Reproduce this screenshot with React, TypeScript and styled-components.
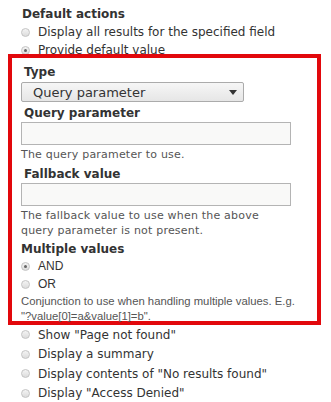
import React from "react";
import styled, { createGlobalStyle } from "styled-components";

const GlobalStyle = createGlobalStyle`
    body {
        margin: 0;
        background: #fff;
        font-family: "DejaVu Sans", sans-serif;
        color: #333;
    }
`;

const Page = styled.div`
    width: 331px;
    height: 402px;
    overflow: hidden;
    padding-top: 5px;
    box-sizing: border-box;
`;

const Heading = styled.div`
    font-weight: bold;
    font-size: 12px;
    line-height: 18px;
    padding-left: 22px;
`;

const RadioList = styled.div<{ $row: number; $indent?: number }>`
    display: flex;
    flex-direction: column;
    padding-left: ${props => props.$indent ?? 21}px;

    & > label {
        height: ${props => props.$row}px;
    }
`;

const RadioRow = styled.label<{ $sans?: boolean }>`
    display: flex;
    align-items: center;
    gap: 8px;
    font-size: 12px;
    font-family: ${props => (props.$sans ? '"Liberation Sans", Arial, sans-serif' : '"DejaVu Sans", sans-serif')};
    color: #333;
`;

const RadioDot = styled.span<{ $checked?: boolean }>`
    width: 9px;
    height: 9px;
    border-radius: 50%;
    border: 1px solid #c4c4c4;
    background: linear-gradient(#f4f4f4, #dcdcdc);
    box-sizing: border-box;
    display: flex;
    align-items: center;
    justify-content: center;
    flex: none;

    &::after {
        content: "";
        width: 3px;
        height: 3px;
        border-radius: 50%;
        background: ${props => (props.$checked ? "#666" : "transparent")};
    }
`;

const Highlight = styled.section`
    position: relative;
    z-index: 1;
    margin: -5px 10px 0 8px;
    border: 4px solid #e2080c;
    background: #fff;
    padding: 5px 0 0 9px;
    height: 271px;
    box-sizing: border-box;
`;

const Field = styled.div`
    display: flex;
    flex-direction: column;
    align-items: flex-start;
`;

const Label = styled.div`
    font-weight: bold;
    font-size: 12px;
    line-height: 18px;
    padding-left: 3px;
`;

const GroupTitle = styled.div`
    font-weight: bold;
    font-size: 12px;
    line-height: 16px;
    margin-top: 3px;
`;

const Select = styled.div`
    width: 223px;
    height: 20px;
    margin-top: 1px;
    box-sizing: border-box;
    border: 1px solid #ababab;
    border-radius: 2px;
    background: linear-gradient(#f6f6f6, #e6e6e6);
    display: flex;
    align-items: center;
    justify-content: space-between;
    padding: 0 6px 0 11px;
    font-size: 13px;
    color: #333;
`;

const Arrow = styled.span`
    width: 0;
    height: 0;
    border-left: 4px solid transparent;
    border-right: 4px solid transparent;
    border-top: 5px solid #333;
`;

const TextInput = styled.input`
    width: 270px;
    height: 23px;
    box-sizing: border-box;
    border: 1px solid #b4b4b4;
    background: #f9f9f8;
    margin: 0;
    padding: 0 4px;
    outline: none;
`;

const Hint = styled.div`
    font-size: 11px;
    letter-spacing: 0.2px;
    line-height: 15px;
    color: #555;
    margin-top: 2px;
    width: 255px;
`;

const Note = styled.div`
    font-size: 11.3px;
    font-family: "Liberation Sans", Arial, sans-serif;
    line-height: 15px;
    color: #555;
    margin-top: 1px;
    width: 290px;
`;

const Code = styled.span`
    white-space: nowrap;
`;

const Spacer = styled.div<{ $h: number }>`
    height: ${props => props.$h}px;
`;

const App: React.FC = () => {
    return (
        <>
            <GlobalStyle />
            <Page>
                <Heading>Default actions</Heading>
                <RadioList $row={18}>
                    <RadioRow><RadioDot />Display all results for the specified field</RadioRow>
                    <RadioRow><RadioDot $checked />Provide default value</RadioRow>
                </RadioList>

                <Highlight>
                    <Field>
                        <Label>Type</Label>
                        <Select>
                            <span>Query parameter</span>
                            <Arrow />
                        </Select>
                    </Field>
                    <Spacer $h={2} />
                    <Field>
                        <Label>Query parameter</Label>
                        <TextInput type="text" />
                        <Hint>The query parameter to use.</Hint>
                    </Field>
                    <Spacer $h={3} />
                    <Field>
                        <Label>Fallback value</Label>
                        <TextInput type="text" />
                        <Hint>The fallback value to use when the above query parameter is not present.</Hint>
                    </Field>
                    <GroupTitle>Multiple values</GroupTitle>
                    <RadioList $row={18} $indent={0}>
                        <RadioRow $sans><RadioDot $checked />AND</RadioRow>
                        <RadioRow $sans><RadioDot />OR</RadioRow>
                    </RadioList>
                    <Note>
                        Conjunction to use when handling multiple values. E.g. <Code>"?value[0]=a&amp;value[1]=b".</Code>
                    </Note>
                </Highlight>

                <RadioList $row={19.5}>
                    <RadioRow><RadioDot />Show "Page not found"</RadioRow>
                    <RadioRow><RadioDot />Display a summary</RadioRow>
                    <RadioRow><RadioDot />Display contents of "No results found"</RadioRow>
                    <RadioRow><RadioDot />Display "Access Denied"</RadioRow>
                </RadioList>
            </Page>
        </>
    );
};

export default App;
